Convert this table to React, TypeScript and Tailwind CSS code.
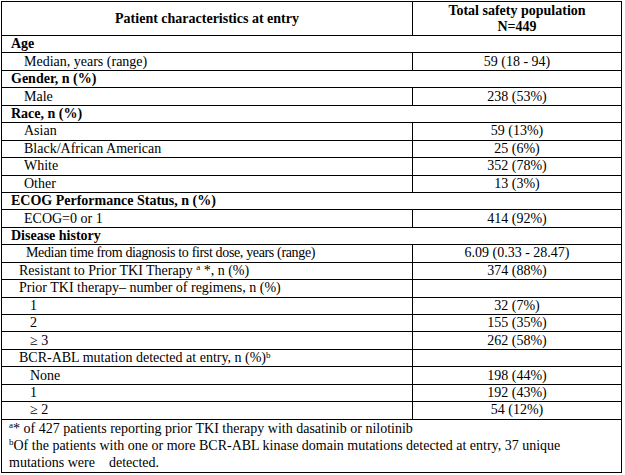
import React from "react"

type Row =
  | { kind: "section"; label: string }
  | { kind: "item"; label: React.ReactNode; value: string; indent: string }

const rows: Row[] = [
  { kind: "section", label: "Age" },
  { kind: "item", label: "Median, years (range)", value: "59 (18 - 94)", indent: "pl-[22px]" },
  { kind: "section", label: "Gender, n (%)" },
  { kind: "item", label: "Male", value: "238 (53%)", indent: "pl-[22px]" },
  { kind: "section", label: "Race, n (%)" },
  { kind: "item", label: "Asian", value: "59 (13%)", indent: "pl-[22px]" },
  { kind: "item", label: "Black/African American", value: "25 (6%)", indent: "pl-[22px]" },
  { kind: "item", label: "White", value: "352 (78%)", indent: "pl-[22px]" },
  { kind: "item", label: "Other", value: "13 (3%)", indent: "pl-[22px]" },
  { kind: "section", label: "ECOG Performance Status, n (%)" },
  { kind: "item", label: "ECOG=0 or 1", value: "414 (92%)", indent: "pl-[22px]" },
  { kind: "section", label: "Disease history" },
  {
    kind: "item",
    label: <span className="tracking-[-0.35px]">Median time from diagnosis to first dose, years (range)</span>,
    value: "6.09 (0.33 - 28.47)",
    indent: "pl-[24px]",
  },
  {
    kind: "item",
    label: (
      <>
        Resistant to Prior TKI Therapy <sup className="text-[9px]">a</sup> *, n (%)
      </>
    ),
    value: "374 (88%)",
    indent: "pl-[17px]",
  },
  { kind: "item", label: "Prior TKI therapy– number of regimens, n (%)", value: "", indent: "pl-[17px]" },
  { kind: "item", label: "1", value: "32 (7%)", indent: "pl-[28px]" },
  { kind: "item", label: "2", value: "155 (35%)", indent: "pl-[28px]" },
  { kind: "item", label: "≥ 3", value: "262 (58%)", indent: "pl-[28px]" },
  {
    kind: "item",
    label: (
      <>
        BCR-ABL mutation detected at entry, n (%)<sup className="text-[9px]">b</sup>
      </>
    ),
    value: "",
    indent: "pl-[17px]",
  },
  { kind: "item", label: "None", value: "198 (44%)", indent: "pl-[28px]" },
  { kind: "item", label: "1", value: "192 (43%)", indent: "pl-[28px]" },
  { kind: "item", label: "≥ 2", value: "54 (12%)", indent: "pl-[28px]" },
]

export default function App() {
  return (
    <div className="min-h-screen bg-white pl-[1px] pt-[1px] text-black" style={{ fontFamily: '"Liberation Serif", "Times New Roman", serif' }}>
      <table className="w-[621px] border-collapse text-[14px] leading-[16px]">
        <thead>
          <tr className="h-[34px]">
            <th className="w-[411px] border border-black font-bold align-middle">Patient characteristics at entry</th>
            <th className="border border-black font-bold align-middle">
              Total safety population
              <br />
              N=449
            </th>
          </tr>
        </thead>
        <tbody>
          {rows.map((r, i) =>
            r.kind === "section" ? (
              <tr key={i} className="h-[17.45px]">
                <td colSpan={2} className="border border-black pl-[9px] font-bold">
                  {r.label}
                </td>
              </tr>
            ) : (
              <tr key={i} className="h-[17.45px]">
                <td className={`border border-black ${r.indent}`}>{r.label}</td>
                <td className="border border-black text-center">{r.value}</td>
              </tr>
            )
          )}
          <tr>
            <td colSpan={2} className="border border-black pl-[7px] pr-2 pb-[1px] leading-[17px]">
              <div>
                <sup className="text-[9px]">a</sup>* of 427 patients reporting prior TKI therapy with dasatinib or nilotinib
              </div>
              <div>
                <sup className="text-[9px]">b</sup>Of the patients with one or more BCR-ABL kinase domain mutations detected at entry, 37 unique
              </div>
              <div className="whitespace-pre">mutations were    detected.</div>
            </td>
          </tr>
        </tbody>
      </table>
    </div>
  )
}
